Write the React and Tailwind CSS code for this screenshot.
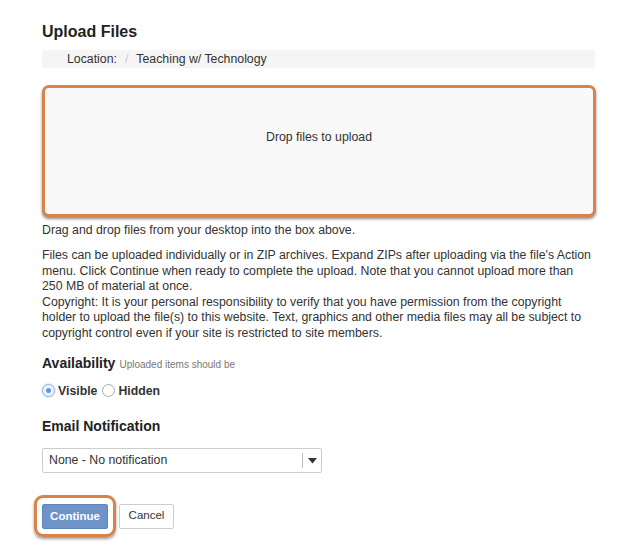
import React, { useState } from "react";

const App = () => {
  const [visibility, setVisibility] = useState("visible");

  return (
    <div className="min-h-[555px] w-[637px] bg-white text-[#333] font-['Liberation_Sans',Arial,sans-serif]">
      <div className="ml-[42px] w-[553px] pt-[22px]">
        {/* Title */}
        <h1 className="text-[16px] font-bold leading-[20px] text-[#222]">Upload Files</h1>

        {/* Breadcrumb */}
        <div className="mt-[8px] flex h-[18px] items-center rounded-[3px] bg-[#f5f5f5] pl-[25px] text-[12.3px] text-[#333]">
          <span>Location:</span>
          <span className="mx-[8px] text-[#ccc]">/</span>
          <span>Teaching w/ Technology</span>
        </div>

        {/* Drop zone */}
        <div className="mt-[17px] flex h-[132px] w-[554px] justify-center rounded-[7px] border-[3px] border-[#d9824a] bg-[#f9f9f9] pt-[40px] text-[12.3px] shadow-[0_2px_3px_rgba(0,0,0,0.45)]">
          Drop files to upload
        </div>

        <p className="mt-[5px] text-[12.3px] leading-[16px]">
          Drag and drop files from your desktop into the box above.
        </p>

        <p className="mt-[10px] whitespace-nowrap text-[12.3px] leading-[15.6px]">
          Files can be uploaded individually or in ZIP archives. Expand ZIPs after uploading via the file's Action
          <br />
          menu. Click Continue when ready to complete the upload. Note that you cannot upload more than
          <br />
          250 MB of material at once.
          <br />
          Copyright: It is your personal responsibility to verify that you have permission from the copyright
          <br />
          holder to upload the file(s) to this website. Text, graphics and other media files may all be subject to
          <br />
          copyright control even if your site is restricted to site members.
        </p>

        {/* Availability */}
        <div className="mt-[11px] flex items-baseline gap-[4px]">
          <h2 className="text-[14px] font-bold text-[#222]">Availability</h2>
          <span className="text-[10px] text-[#777]">Uploaded items should be</span>
        </div>
        <div className="mt-[8px] flex items-center text-[12.3px] font-bold">
          <button
            type="button"
            onClick={() => setVisibility("visible")}
            className="flex items-center"
          >
            <span className="flex h-[13px] w-[13px] items-center justify-center rounded-full border border-[#9db8d9] bg-[#eef4fb] shadow-[0_0_2px_rgba(90,150,220,0.6)]">
              {visibility === "visible" && <span className="h-[5px] w-[5px] rounded-full bg-[#5a9ae0]" />}
            </span>
            <span className="ml-[3px]">Visible</span>
          </button>
          <button
            type="button"
            onClick={() => setVisibility("hidden")}
            className="ml-[5px] flex items-center"
          >
            <span className="flex h-[13px] w-[13px] items-center justify-center rounded-full border border-[#aaa] bg-white">
              {visibility === "hidden" && <span className="h-[5px] w-[5px] rounded-full bg-[#5a9ae0]" />}
            </span>
            <span className="ml-[3px]">Hidden</span>
          </button>
        </div>

        {/* Email Notification */}
        <h2 className="mt-[16px] text-[14px] font-bold text-[#222]">Email Notification</h2>
        <div className="mt-[11px] flex h-[25px] w-[280px] items-center rounded-[2px] border border-[#ccc] bg-white text-[12.3px]">
          <span className="flex-1 pl-[6px]">None - No notification</span>
          <span className="h-[15px] w-px bg-[#bbb]" />
          <span className="flex w-[18px] justify-center">
            <svg width="9" height="6" viewBox="0 0 9 6">
              <path d="M0 0 L9 0 L4.5 5.5 Z" fill="#333" />
            </svg>
          </span>
        </div>

        {/* Actions */}
        <div className="ml-[-8px] mt-[22px] flex items-center">
          <div className="rounded-[9px] border-[3px] border-[#d9824a] p-[5px] shadow-[0_2px_3px_rgba(0,0,0,0.4)]">
            <button
              type="button"
              className="h-[25px] w-[66px] rounded-[2px] border border-[#5f86bb] bg-[#6d93c8] text-[11.5px] font-bold text-white"
            >
              Continue
            </button>
          </div>
          <button
            type="button"
            className="ml-[3px] h-[25px] w-[55px] rounded-[2px] border border-[#ccc] bg-white text-[11.5px] text-[#333]"
          >
            Cancel
          </button>
        </div>
      </div>
    </div>
  );
};

export default App;
